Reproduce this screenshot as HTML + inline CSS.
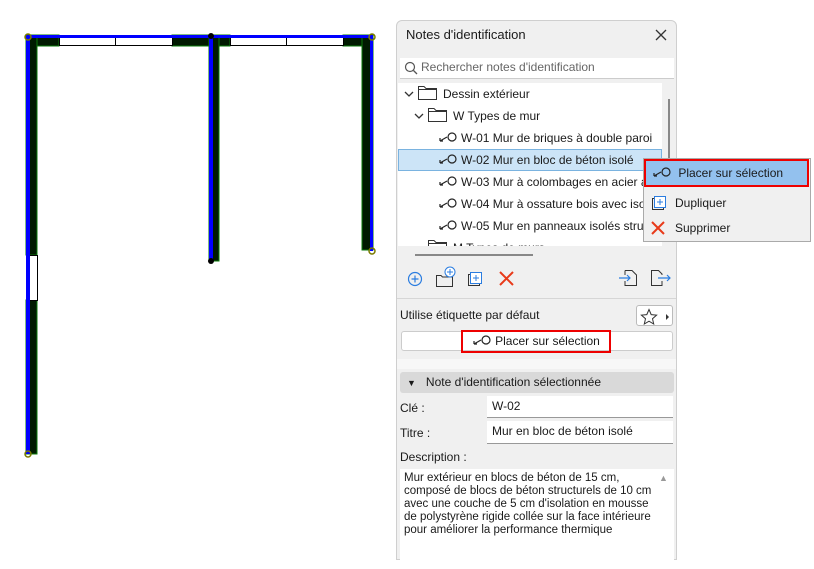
<!DOCTYPE html>
<html><head><meta charset="utf-8"><style>
*{margin:0;padding:0;box-sizing:border-box}
body{width:814px;height:556px;background:#fff;font-family:"Segoe UI","Liberation Sans",sans-serif;font-size:12px;color:#1a1a1a;position:relative;overflow:hidden}
.a{position:absolute}
.panel{left:396px;top:20px;width:281px;height:540px;background:#f0f0f0;border:1px solid #cfcfcf;border-radius:6px 6px 0 0}
.t{position:absolute;white-space:nowrap}
.row{position:absolute;left:0;height:22px;line-height:22px;white-space:nowrap}
.in{background:#fff;border-bottom:1px solid #999;position:absolute}
.tag{display:inline-block;width:20px;height:12px;vertical-align:-1px;margin-right:3px}
.fold{display:inline-block;width:19px;height:14px;vertical-align:-2px;margin-right:6px}
</style></head><body>
<svg width="0" height="0" style="position:absolute"><defs>
<symbol id="tg" viewBox="0 0 20 12"><path d="M2 10 L9 6 M2 10 L2 7 M2 10 L5 10" stroke="#222" stroke-width="1.2" fill="none"/><circle cx="14" cy="6" r="4" fill="none" stroke="#222" stroke-width="1.2"/></symbol>
<symbol id="fd" viewBox="0 0 19 14"><path d="M0.5 13.5 V0.5 H6 L8 2.5 H18.5 V13.5 Z M0.5 3.5 H18.5" stroke="#333" fill="none"/></symbol>
</defs></svg>
<svg class="a" style="left:0;top:0" width="396" height="556">
<g fill="#001a00" stroke="#0a7a0a" stroke-width="1">
<rect x="26" y="35" width="33" height="11"/>
<rect x="172" y="35" width="58" height="11"/>
<rect x="343" y="35" width="30" height="11"/>
<rect x="26" y="35" width="11" height="220"/>
<rect x="26" y="300" width="11" height="154"/>
<rect x="209" y="35" width="10" height="226"/>
<rect x="362" y="35" width="11" height="215"/>
</g>
<g fill="#fff" stroke="#000" stroke-width="1">
<rect x="59.5" y="37.5" width="56" height="8"/><rect x="115.5" y="37.5" width="57" height="8"/>
<rect x="230.5" y="37.5" width="56" height="8"/><rect x="286.5" y="37.5" width="57" height="8"/>
<rect x="29.5" y="255.5" width="8" height="45"/>
</g>
<g fill="#0000ff">
<rect x="26" y="35" width="347" height="3"/>
<rect x="26" y="35" width="4" height="419"/>
<rect x="209" y="35" width="4" height="226"/>
<rect x="370" y="35" width="3" height="216"/>
</g>
<g fill="none" stroke="#7a7a00" stroke-width="1.5">
<circle cx="28" cy="37" r="3"/><circle cx="372" cy="37" r="3"/><circle cx="372" cy="251" r="3"/><circle cx="28" cy="454" r="3"/>
</g>
<circle cx="211" cy="36" r="3" fill="#000"/><circle cx="211" cy="261" r="3" fill="#000"/>
</svg>

<div class="a panel">
<div class="t" style="left:9px;top:6px;font-size:13px">Notes d'identification</div>
<svg class="a" style="left:258px;top:8px" width="12" height="12"><path d="M1 1 L11 11 M11 1 L1 11" stroke="#333" stroke-width="1.3"/></svg>
<div class="a" style="left:3px;top:37px;width:274px;height:21px;background:#fff;border-bottom:1px solid #ccc">
<svg class="a" style="left:4px;top:3px" width="14" height="14"><circle cx="6" cy="6" r="4.5" fill="none" stroke="#555" stroke-width="1.2"/><line x1="9.5" y1="9.5" x2="13" y2="13" stroke="#555" stroke-width="1.3"/></svg>
<div class="t" style="left:21px;top:2px;color:#666">Rechercher notes d'identification</div></div>
<div class="a" style="left:1px;top:62px;width:264px;height:163px;background:#fff;overflow:hidden">
<div class="row" style="top:0;left:6px"><svg width="10" height="8" style="margin-right:4px"><path d="M1 2 L5 6 L9 2" stroke="#333" fill="none" stroke-width="1.3"/></svg><svg class="fold"><use href="#fd"/></svg>Dessin extérieur</div>
<div class="row" style="top:22px;left:16px"><svg width="10" height="8" style="margin-right:4px"><path d="M1 2 L5 6 L9 2" stroke="#333" fill="none" stroke-width="1.3"/></svg><svg class="fold"><use href="#fd"/></svg>W Types de mur</div>
<div class="row" style="top:44px;left:40px"><svg class="tag"><use href="#tg"/></svg>W-01 Mur de briques à double paroi</div>
<div class="row" style="top:66px;left:0;width:264px;background:#cce4f7;border:1px solid #7ab3e0;padding-left:39px;line-height:20px"><svg class="tag"><use href="#tg"/></svg>W-02 Mur en bloc de béton isolé</div>
<div class="row" style="top:88px;left:40px"><svg class="tag"><use href="#tg"/></svg>W-03 Mur à colombages en acier avec</div>
<div class="row" style="top:110px;left:40px"><svg class="tag"><use href="#tg"/></svg>W-04 Mur à ossature bois avec isola</div>
<div class="row" style="top:132px;left:40px"><svg class="tag"><use href="#tg"/></svg>W-05 Mur en panneaux isolés struct</div>
<div class="row" style="top:154px;left:30px"><svg class="fold"><use href="#fd"/></svg>M Types de murs</div>
</div>
<div class="a" style="left:271px;top:78px;width:2px;height:70px;background:#888"></div>
<div class="a" style="left:18px;top:233px;width:118px;height:2px;background:#888"></div>
<svg class="a" style="left:10px;top:250px" width="16" height="16"><circle cx="8" cy="8" r="6.5" fill="none" stroke="#2b7de0" stroke-width="1.2"/><path d="M8 4.5V11.5M4.5 8H11.5" stroke="#2b7de0" stroke-width="1.2"/></svg>
<svg class="a" style="left:38px;top:245px" width="22" height="22"><path d="M1.5 20.5 V9.5 H6 L7.5 11 H17.5 V20.5 Z" stroke="#333" fill="none"/><circle cx="15" cy="6" r="5" fill="#fff" stroke="#2b7de0"/><path d="M15 3V9M12 6H18" stroke="#2b7de0"/></svg>
<svg class="a" style="left:70px;top:250px" width="16" height="16"><rect x="1.5" y="3.5" width="11" height="11" fill="none" stroke="#333"/><rect x="3.5" y="1.5" width="11" height="11" fill="#fff" stroke="#2b7de0"/><path d="M9 4V10M6 7H12" stroke="#2b7de0"/></svg>
<svg class="a" style="left:102px;top:250px" width="15" height="15"><path d="M1 1L14 14M14 1L1 14" stroke="#e83a1a" stroke-width="2"/></svg>
<svg class="a" style="left:222px;top:248px" width="20" height="18"><path d="M6 1.5H13L17.5 6V16.5H6V12M6 6V1.5" stroke="#333" fill="none"/><path d="M0 9H11M8 6L11 9L8 12" stroke="#2b7de0" fill="none" stroke-width="1.2"/></svg>
<svg class="a" style="left:253px;top:248px" width="22" height="18"><path d="M12 12V16.5H1.5V1.5H8.5L12 5V6" stroke="#333" fill="none"/><path d="M8 9H20M17 6L20 9L17 12" stroke="#2b7de0" fill="none" stroke-width="1.2"/></svg>
<div class="a" style="left:0;top:277px;width:279px;height:1px;background:#d6d6d6"></div>
<div class="t" style="left:3px;top:287px">Utilise étiquette par défaut</div>
<div class="a" style="left:239px;top:284px;width:37px;height:21px;background:#fff;border:1px solid #bbb;border-radius:3px">
<svg class="a" style="left:3px;top:2px" width="32" height="18"><path d="M9 1.5L11.2 6.6L16.6 7.1L12.5 10.7L13.7 16L9 13.2L4.3 16L5.5 10.7L1.4 7.1L6.8 6.6Z" fill="none" stroke="#333"/><path d="M26 6L29 9L26 12Z" fill="#333"/></svg></div>
<div class="a" style="left:4px;top:310px;width:272px;height:20px;background:#fff;border:1px solid #ccc;border-radius:3px"></div>
<div class="a" style="left:64px;top:309px;width:150px;height:23px;border:2px solid #e00;text-align:center;line-height:19px"><svg class="tag"><use href="#tg"/></svg>Placer sur sélection</div>
<div class="a" style="left:0;top:338px;width:279px;height:10px;background:#f7f7f7"></div>
<div class="a" style="left:3px;top:351px;width:274px;height:21px;background:#d9d9d9;border-radius:3px;line-height:21px;padding-left:7px"><span style="font-size:9px">▼</span>&nbsp;&nbsp;&nbsp;Note d'identification sélectionnée</div>
<div class="t" style="left:3px;top:380px">Clé :</div>
<div class="in" style="left:90px;top:375px;width:186px;height:22px;line-height:20px;padding-left:5px">W-02</div>
<div class="t" style="left:3px;top:405px">Titre :</div>
<div class="in" style="left:90px;top:400px;width:186px;height:23px;line-height:20px;padding-left:5px">Mur en bloc de béton isolé</div>
<div class="t" style="left:3px;top:429px">Description :</div>
<div class="a" style="left:3px;top:448px;width:274px;height:100px;background:#fff;padding:3px 4px;line-height:13px;font-size:11.5px">Mur extérieur en blocs de béton de 15 cm,<br>composé de blocs de béton structurels de 10 cm<br>avec une couche de 5 cm d'isolation en mousse<br>de polystyrène rigide collée sur la face intérieure<br>pour améliorer la performance thermique
<div class="a" style="left:259px;top:3px;font-size:9px;color:#999">▲</div></div>
</div>

<div class="a" style="left:643px;top:158px;width:168px;height:84px;background:#f0f0f0;border:1px solid #aaa"></div>
<div class="a" style="left:644px;top:159px;width:165px;height:28px;background:#93c1ee;border:2px solid #e00;line-height:24px;padding-left:6px"><svg class="tag"><use href="#tg"/></svg>&nbsp;Placer sur sélection</div>
<svg class="a" style="left:651px;top:195px" width="16" height="16"><rect x="1.5" y="3.5" width="11" height="11" fill="none" stroke="#333"/><rect x="3.5" y="1.5" width="11" height="11" fill="#fff" stroke="#2b7de0"/><path d="M9 4V10M6 7H12" stroke="#2b7de0"/></svg>
<div class="t" style="left:675px;top:196px">Dupliquer</div>
<svg class="a" style="left:651px;top:221px" width="14" height="14"><path d="M1 1L13 13M13 1L1 13" stroke="#e83a1a" stroke-width="2"/></svg>
<div class="t" style="left:675px;top:221px">Supprimer</div>
</body></html>
